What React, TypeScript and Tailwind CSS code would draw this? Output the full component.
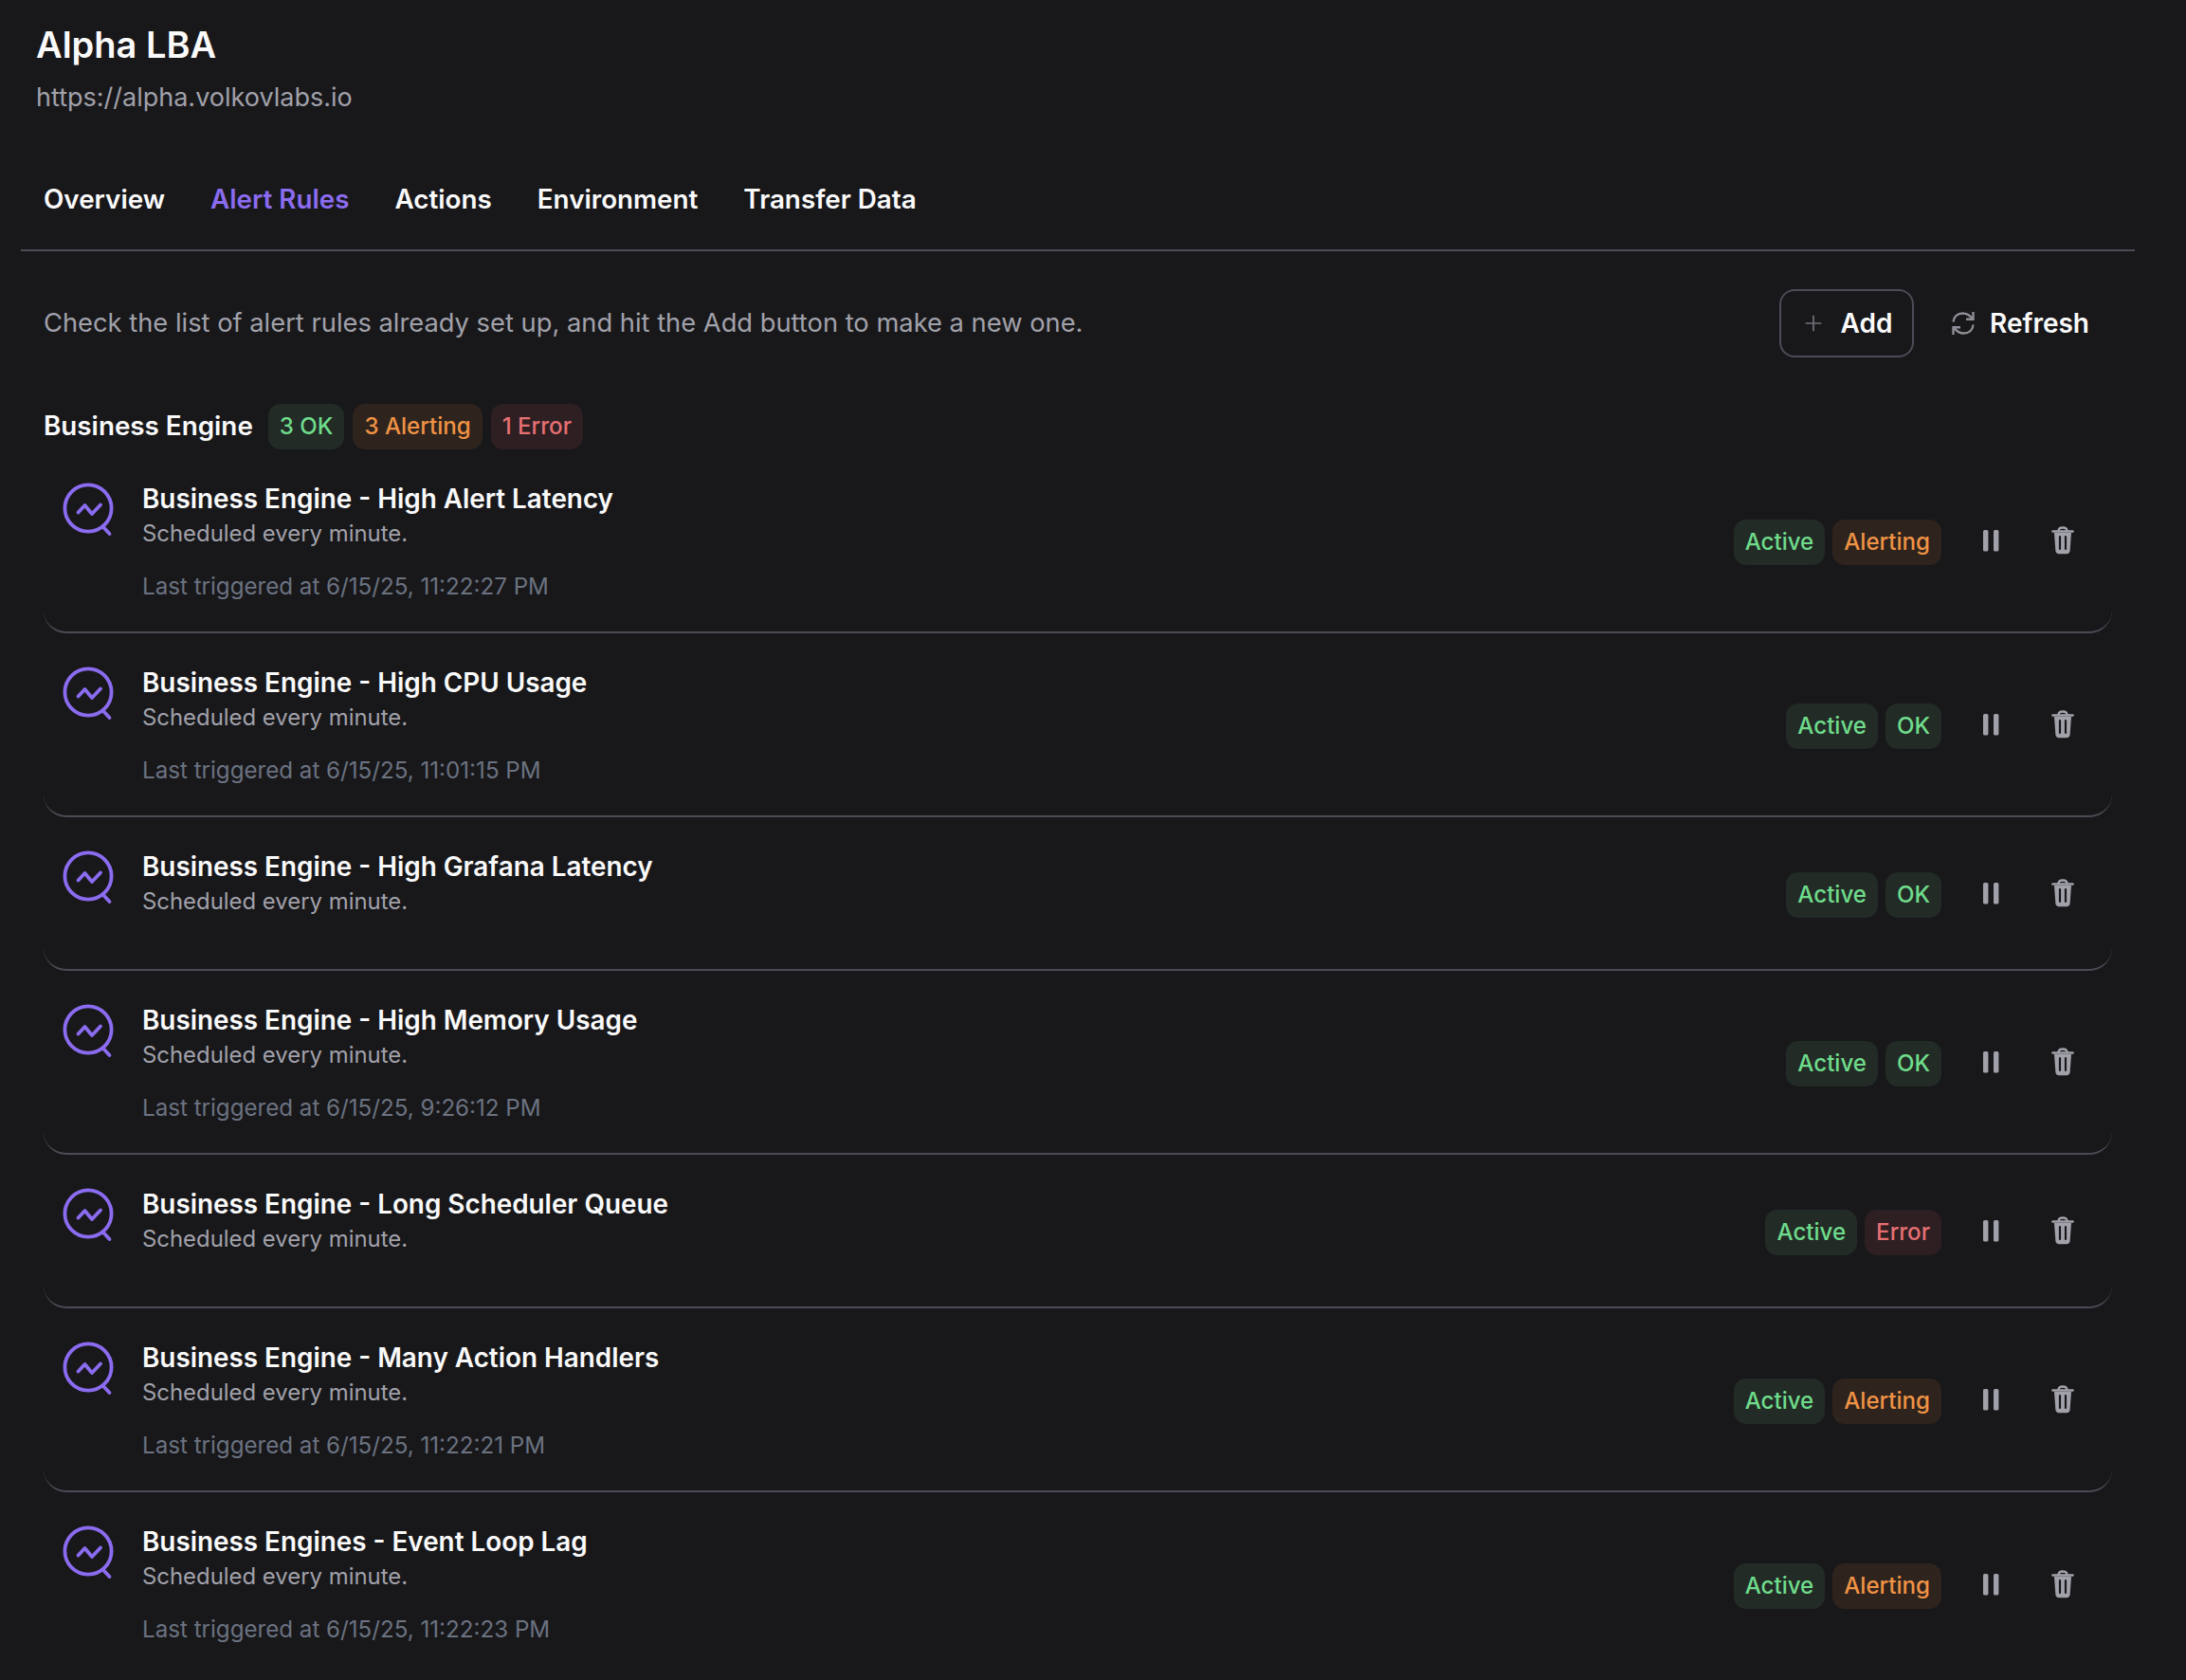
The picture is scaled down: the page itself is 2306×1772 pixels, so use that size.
import { Plus } from "lucide-react";

type Rule = { name: string; state: "OK" | "Alerting" | "Error"; last?: string };

const rules: Rule[] = [
  { name: "Business Engine - High Alert Latency", state: "Alerting", last: "6/15/25, 11:22:27 PM" },
  { name: "Business Engine - High CPU Usage", state: "OK", last: "6/15/25, 11:01:15 PM" },
  { name: "Business Engine - High Grafana Latency", state: "OK" },
  { name: "Business Engine - High Memory Usage", state: "OK", last: "6/15/25, 9:26:12 PM" },
  { name: "Business Engine - Long Scheduler Queue", state: "Error" },
  { name: "Business Engine - Many Action Handlers", state: "Alerting", last: "6/15/25, 11:22:21 PM" },
  { name: "Business Engines - Event Loop Lag", state: "Alerting", last: "6/15/25, 11:22:23 PM" },
];

const tabs = ["Overview", "Alert Rules", "Actions", "Environment", "Transfer Data"];

function Badge({ tone, children }: { tone: "green" | "orange" | "red"; children: React.ReactNode }) {
  const colors = {
    green: "bg-[#222b25] text-[#6fdc8c]",
    orange: "bg-[#2f231d] text-[#f09345]",
    red: "bg-[#2e1f22] text-[#e66f72]",
  };
  return (
    <span className={`flex h-[48px] items-center rounded-[13px] px-[12px] pt-[1px] text-[24.1px] font-medium ${colors[tone]}`}>
      {children}
    </span>
  );
}

function RuleIcon() {
  return (
    <svg width="60" height="60" viewBox="0 0 60 60" fill="none" stroke="#8b6cf0" strokeWidth="3.8" strokeLinecap="round" strokeLinejoin="round">
      <circle cx="28" cy="28" r="24.6" />
      <path d="M44 48 L50.5 55" />
      <path d="M17.5 32.5 L24.5 25 L32 34 L41 24.5" />
    </svg>
  );
}

function RefreshIcon() {
  return (
    <svg width="24" height="26" viewBox="0 0 24 26" fill="none" stroke="#8e8e96" strokeWidth="2.4">
      <path d="M1.5 11.5 C2 6 6 2.5 11.5 2.5 C15.5 2.5 19 4.5 21.5 8" />
      <path d="M22.5 1 V8.8 H15" />
      <path d="M22.5 14.5 C22 20 18 23.5 12.5 23.5 C8.5 23.5 5 21.5 2.5 18" />
      <path d="M1.5 25 V17.2 H9" />
    </svg>
  );
}

function PauseIcon() {
  return (
    <svg width="18" height="24" viewBox="0 0 18 24" fill="#a1a1aa">
      <rect x="1" y="1" width="5.4" height="22.5" rx="1.6" />
      <rect x="12" y="1" width="5.4" height="22.5" rx="1.6" />
    </svg>
  );
}

function TrashIcon() {
  return (
    <svg width="24" height="30" viewBox="0 0 24 30" fill="none">
      <path d="M7.5 5 C7.5 2.6 9.5 1.5 12 1.5 C14.5 1.5 16.5 2.6 16.5 5" stroke="#a1a1aa" strokeWidth="2.4" />
      <path d="M1.5 5.5 H22.5" stroke="#a1a1aa" strokeWidth="2.6" strokeLinecap="round" />
      <path d="M3 7 H21 L19.6 26 C19.5 28 18 29.2 16 29.2 H8 C6 29.2 4.5 28 4.4 26 Z" fill="#a1a1aa" />
      <path d="M9 11 V24 M15 11 V24" stroke="#18181b" strokeWidth="2.2" strokeLinecap="round" />
    </svg>
  );
}

function RuleCard({ rule }: { rule: Rule }) {
  const tone = rule.state === "OK" ? "green" : rule.state === "Alerting" ? "orange" : "red";
  return (
    <div className={`flex items-center justify-between rounded-b-[24px] border-b-2 border-[#4b4b55] pl-[19px] pr-[40px] last:border-b-0 ${rule.last ? "h-[194px]" : "h-[162px]"}`}>
      <div className="flex gap-[25px] self-start pt-[34px]">
        <RuleIcon />
        <div className="flex flex-col">
          <span className="text-[27.85px] leading-[36px] font-semibold text-[#fafafa]">{rule.name}</span>
          <span className="pt-[1px] text-[23.9px] leading-[36px] text-[#a1a1aa]">Scheduled every minute.</span>
          {rule.last && (
            <span className="mt-[20px] text-[24.15px] leading-[36px] text-[#6b7280]">Last triggered at {rule.last}</span>
          )}
        </div>
      </div>
      <div className="flex items-center">
        <div className="mt-[4px] flex gap-[8px]">
          <Badge tone="green">Active</Badge>
          <Badge tone={tone}>{rule.state}</Badge>
        </div>
        <div className="ml-[43px]"><PauseIcon /></div>
        <div className="ml-[55px]"><TrashIcon /></div>
      </div>
    </div>
  );
}

export default function App() {
  return (
    <div className="h-[1772px] w-[2306px] overflow-hidden bg-[#18181b] font-['Inter',sans-serif] text-[#fafafa]">
      <div className="pl-[38px] pt-[24px]">
        <h1 className="text-[38px] leading-[46px] font-semibold">Alpha LBA</h1>
        <p className="mt-[13px] text-[27px] leading-[40px] text-[#a1a1aa]">https://alpha.volkovlabs.io</p>
      </div>
      <div className="ml-[22px] mt-[41px] flex h-[101px] w-[2230px] gap-[48px] border-b-2 border-[#4b4b55] pl-[24px] pt-[26px]">
        {tabs.map((t) => (
          <span key={t} className={`text-[27.8px] leading-[40px] font-semibold ${t === "Alert Rules" ? "text-[#8b6cf0]" : ""}`}>
            {t}
          </span>
        ))}
      </div>
      <div className="ml-[46px] mr-[102px] mt-[40px] flex h-[72px] items-center justify-between">
        <p className="text-[27.3px] text-[#a1a1aa]">Check the list of alert rules already set up, and hit the Add button to make a new one.</p>
        <div className="flex items-center">
          <button className="flex h-[72px] w-[142px] items-center justify-center gap-[16px] rounded-[16px] border-2 border-[#4b4b55] text-[28px] font-semibold">
            <Plus size={26} strokeWidth={1.6} color="#71717a" />
            Add
          </button>
          <button className="ml-[40px] flex items-center gap-[16px] text-[28px] font-semibold">
            <RefreshIcon />
            Refresh
          </button>
        </div>
      </div>
      <div className="ml-[46px] mt-[49px] flex items-center gap-[9px]">
        <span className="mr-[7px] text-[27.8px] font-semibold">Business Engine</span>
        <Badge tone="green">3 OK</Badge>
        <Badge tone="orange">3 Alerting</Badge>
        <Badge tone="red">1 Error</Badge>
      </div>
      <div className="ml-[46px] w-[2182px]">
        {rules.map((r) => (
          <RuleCard key={r.name} rule={r} />
        ))}
      </div>
    </div>
  );
}
